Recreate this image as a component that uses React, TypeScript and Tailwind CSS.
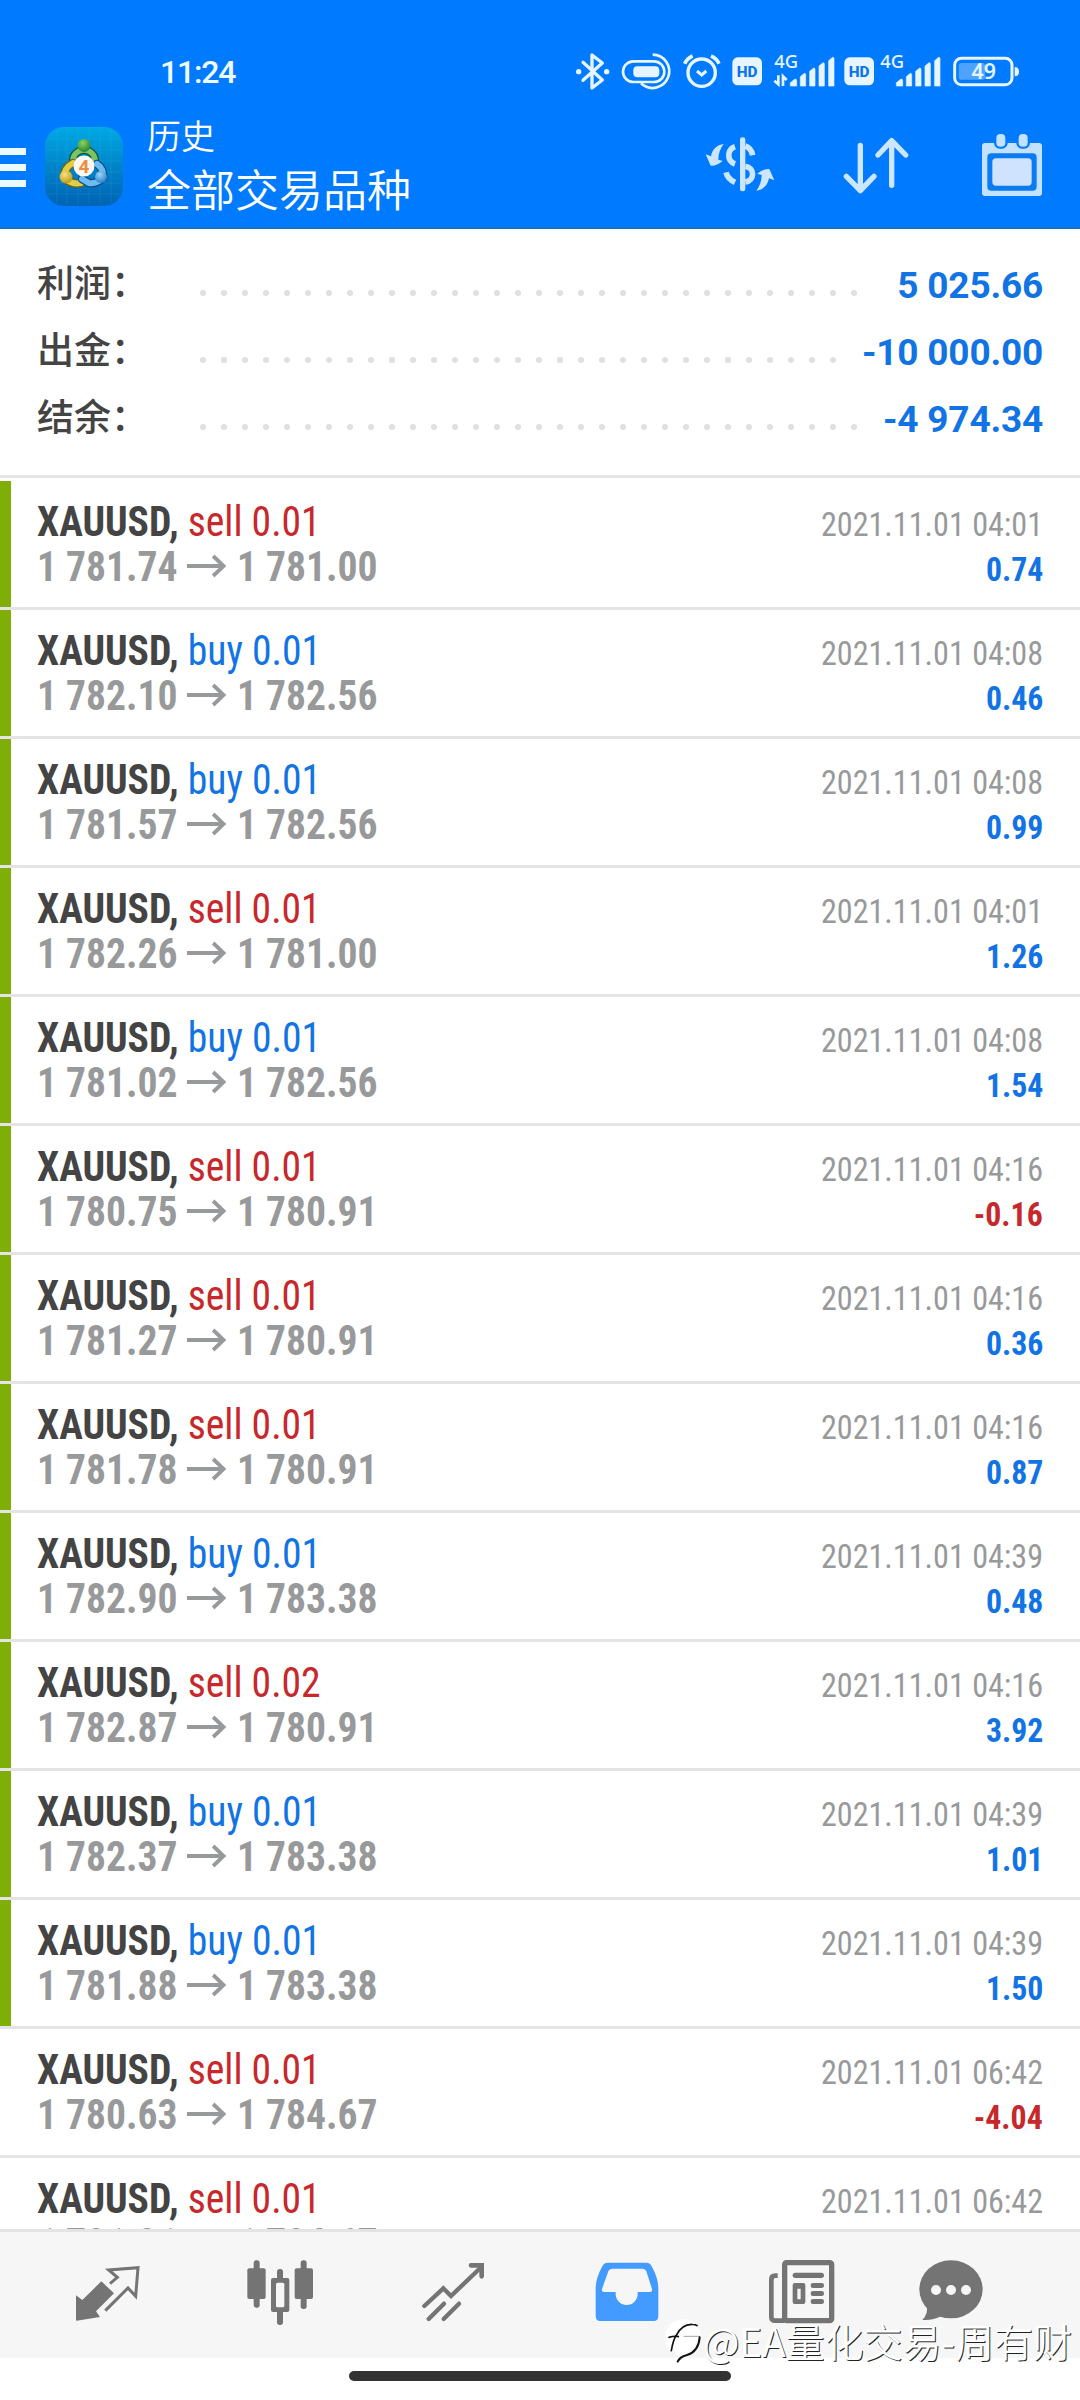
import React from 'react';
import clsx from 'clsx';

interface Deal {
  side: 'buy' | 'sell';
  volume: string;
  open: string;
  close: string;
  time: string;
  profit: string;
  marked?: boolean;
}

const totals = [
  { label: '利润：', value: '5 025.66', dots: 32 },
  { label: '出金：', value: '-10 000.00', dots: 31 },
  { label: '结余：', value: '-4 974.34', dots: 32 },
];

const deals: Deal[] = [
  { side: 'sell', volume: '0.01', open: '1 781.74', close: '1 781.00', time: '2021.11.01 04:01', profit: '0.74', marked: true },
  { side: 'buy', volume: '0.01', open: '1 782.10', close: '1 782.56', time: '2021.11.01 04:08', profit: '0.46', marked: true },
  { side: 'buy', volume: '0.01', open: '1 781.57', close: '1 782.56', time: '2021.11.01 04:08', profit: '0.99', marked: true },
  { side: 'sell', volume: '0.01', open: '1 782.26', close: '1 781.00', time: '2021.11.01 04:01', profit: '1.26', marked: true },
  { side: 'buy', volume: '0.01', open: '1 781.02', close: '1 782.56', time: '2021.11.01 04:08', profit: '1.54', marked: true },
  { side: 'sell', volume: '0.01', open: '1 780.75', close: '1 780.91', time: '2021.11.01 04:16', profit: '-0.16', marked: true },
  { side: 'sell', volume: '0.01', open: '1 781.27', close: '1 780.91', time: '2021.11.01 04:16', profit: '0.36', marked: true },
  { side: 'sell', volume: '0.01', open: '1 781.78', close: '1 780.91', time: '2021.11.01 04:16', profit: '0.87', marked: true },
  { side: 'buy', volume: '0.01', open: '1 782.90', close: '1 783.38', time: '2021.11.01 04:39', profit: '0.48', marked: true },
  { side: 'sell', volume: '0.02', open: '1 782.87', close: '1 780.91', time: '2021.11.01 04:16', profit: '3.92', marked: true },
  { side: 'buy', volume: '0.01', open: '1 782.37', close: '1 783.38', time: '2021.11.01 04:39', profit: '1.01', marked: true },
  { side: 'buy', volume: '0.01', open: '1 781.88', close: '1 783.38', time: '2021.11.01 04:39', profit: '1.50', marked: true },
  { side: 'sell', volume: '0.01', open: '1 780.63', close: '1 784.67', time: '2021.11.01 06:42', profit: '-4.04' },
  { side: 'sell', volume: '0.01', open: '1 781.31', close: '1 784.67', time: '2021.11.01 06:42', profit: '-3.36' },
];

const HdIcon = () => (
  <svg className="h-10 w-10" viewBox="501 66 120 120">
    <rect x="517" y="82" width="89" height="84" rx="16" fill="#e6f5ff" />
    <text x="561.5" y="141" fontSize="46" textAnchor="middle" className="font-['Roboto',sans-serif] font-extrabold" fill="#0a72ea">
      HD
    </text>
  </svg>
);

const SignalBars = () => (
  <path
    d="M691 168v-10l14-11q5 0 5 5v16zM721 168v-28l12-10q4 0 4 4v34zM749 168v-44l12-10q4 0 4 4v50zM777 168v-60l12-10q4 0 4 4v66zM806 168v-76l12-10q4 0 4 4v82z"
    fill="#e6f5ff"
    stroke="#e6f5ff"
    strokeWidth="2"
    strokeLinejoin="round"
  />
);

const StatusBar = () => (
  <div className="flex h-[110px] items-start pt-[52px] pl-[160px]">
    <span className="w-[416px] font-['Roboto',sans-serif] text-[32px] leading-[41px] font-medium tracking-[-1.2px] text-[#eefaff]">11:24</span>

    {/* Bluetooth */}
    <svg className="h-10 w-10" viewBox="48 66 120 120" fill="none" stroke="#e6f5ff" strokeWidth="10" strokeLinejoin="round" strokeLinecap="round">
      <path d="M69 97l58 53-31 24V75l31 24-58 52" />
      <circle cx="56" cy="125" r="8" fill="#e6f5ff" stroke="none" />
      <circle cx="140" cy="125" r="8" fill="#e6f5ff" stroke="none" />
    </svg>

    {/* Capsule */}
    <svg className="h-10 w-[61px]" viewBox="168 66 183 120" fill="none" stroke="#e6f5ff" strokeWidth="8">
      <rect x="189" y="94" width="124" height="62" rx="31" />
      <rect x="220" y="109" width="78" height="33" rx="12" fill="#e6f5ff" stroke="none" />
      <path d="M278 74A50 50 0 1 1 243 160" />
    </svg>

    {/* Alarm */}
    <svg className="h-10 w-[50px]" viewBox="351 66 150 120" fill="none" stroke="#e6f5ff" strokeWidth="10">
      <circle cx="425" cy="128" r="41" />
      <path d="M411 123l14 12 14-12" strokeWidth="9" />
      <path d="M374 101q7-16 24-23M453 78q17 7 24 23" strokeWidth="11" />
    </svg>

    <HdIcon />

    <svg className="h-10 w-[72px] overflow-visible" viewBox="621 66 216 120">
      <text x="643" y="114" fontSize="55" className="font-['Noto_Sans',sans-serif] font-medium" fill="#e6f5ff">
        4G
      </text>
      <path d="M643 152l12 11v-27M669 168v-29l11 11" fill="none" stroke="#e6f5ff" strokeWidth="8" />
      <SignalBars />
    </svg>

    <HdIcon />

    <svg className="h-10 w-[68px] overflow-visible" viewBox="957 66 204 120">
      <text x="961" y="114" fontSize="55" className="font-['Noto_Sans',sans-serif] font-medium" fill="#e6f5ff">
        4G
      </text>
      <g transform="translate(318 0)">
        <SignalBars />
      </g>
    </svg>

    {/* Battery */}
    <svg className="h-10 w-20 overflow-visible" viewBox="1161 66 240 120">
      <rect x="1196" y="99" width="80" height="50" rx="8" fill="#4da3ff" />
      <rect x="1184" y="85" width="172" height="79" rx="20" fill="none" stroke="#e6f5ff" strokeWidth="9" />
      <path d="M1364 111q13 0 13 14t-13 14z" fill="#e6f5ff" />
      <text x="1271" y="147" fontSize="64" textAnchor="middle" className="font-['Noto_Sans',sans-serif] font-semibold" fill="#e6f5ff">
        49
      </text>
    </svg>
  </div>
);

const AppLogo = () => (
  <svg className="mt-[17px] ml-[19px] h-[79px] w-[78px]" viewBox="0 0 78 79">
    <defs>
      <linearGradient id="tile" x1="0" y1="0" x2="0" y2="1">
        <stop offset="0" stopColor="#00a9e4" />
        <stop offset="0.5" stopColor="#0084c8" />
        <stop offset="1" stopColor="#0062b4" />
      </linearGradient>
      <radialGradient id="green" cx="0.4" cy="0.3" r="0.8">
        <stop offset="0" stopColor="#8fd45e" />
        <stop offset="1" stopColor="#1b7a2c" />
      </radialGradient>
      <radialGradient id="yellow" cx="0.4" cy="0.3" r="0.8">
        <stop offset="0" stopColor="#f7e47a" />
        <stop offset="1" stopColor="#b58d10" />
      </radialGradient>
      <radialGradient id="blue" cx="0.4" cy="0.3" r="0.8">
        <stop offset="0" stopColor="#9bd6f8" />
        <stop offset="1" stopColor="#1c76c4" />
      </radialGradient>
    </defs>
    <rect width="78" height="79" rx="19" fill="url(#tile)" />
    <path d="M12 2v75M22 2v75M33 2v75M44 2v75M55 2v75M66 2v75M2 12h74M2 23h74M2 34h74M2 45h74M2 56h74M2 67h74" stroke="#4fc3f0" strokeOpacity="0.14" strokeWidth="1" />
    <g fill="none" strokeLinecap="round">
      <path d="M28 33a11 10 0 1 1 22 0" stroke="#0c5a2c" strokeWidth="8" />
      <path d="M28 33a11 10 0 1 1 22 0" stroke="#7cc266" strokeWidth="5.500" />
      <path d="M28 36q-9 5-9 14 6 8 17 6" stroke="#6e6414" strokeWidth="8.500" />
      <path d="M28 36q-9 5-9 14 6 8 17 6" stroke="#e0cf45" strokeWidth="6" />
      <path d="M52 37q7 5 6 14-6 6-14 5l-7-4" stroke="#0d4c8a" strokeWidth="8.500" />
      <path d="M52 37q7 5 6 14-6 6-14 5l-7-4" stroke="#6dbcf0" strokeWidth="6" />
    </g>
    <circle cx="39" cy="18.500" r="6.500" fill="url(#green)" />
    <circle cx="21" cy="50" r="6.500" fill="url(#yellow)" />
    <circle cx="56" cy="50" r="6" fill="url(#blue)" />
    <circle cx="39" cy="39" r="10.500" fill="#fdf8f2" />
    <text x="39" y="46" fontSize="19" textAnchor="middle" className="font-['Roboto',sans-serif] font-bold" fill="#ee8c3c">
      4
    </text>
  </svg>
);

const TitleBar = () => (
  <div className="flex h-[117px] items-start">
    <div className="mt-[38px] flex w-[26px] flex-col gap-[9px]">
      <span className="h-[7px] bg-[#ecfaff]" />
      <span className="h-[7px] bg-[#ecfaff]" />
      <span className="h-[7px] bg-[#ecfaff]" />
    </div>
    <AppLogo />
    <div className="ml-6 flex flex-col font-['Noto_Sans_CJK_SC',sans-serif] font-[350] text-white">
      <span className="mt-[3px] text-[34px] leading-[44px]">历史</span>
      <span className="text-[44px] leading-[62px]">全部交易品种</span>
    </div>

    <div className="mt-[22px] ml-auto flex pr-[37px]">
      {/* Currency */}
      <svg className="h-[66px] w-[71px]" viewBox="435 306 213 198" fill="#cce6ff">
        <rect x="540" y="322" width="16" height="162" rx="7" />
        <path d="M491 342C474 344 457 355 453 379l-16-6 15 34q17 2 36-14l-13-4c0-18 6-34 16-47z" />
        <path d="M491 342C474 344 457 355 453 379l-16-6 15 34q17 2 36-14l-13-4c0-18 6-34 16-47z" transform="rotate(180 540 412)" />
        <g fill="none" stroke="#cce6ff" strokeWidth="17">
          <path d="M525 350c-25 9-25 43 0 52" />
          <path d="M498 427q5 20 27 30" />
          <path d="M556 348q18 6 22 28" />
          <path d="M556 409c29 3 29 43 0 47" />
        </g>
      </svg>

      {/* Sort */}
      <svg className="ml-[66px] h-[66px] w-[68px]" viewBox="846 306 204 198" fill="none" stroke="#cce6ff" strokeWidth="16" strokeLinecap="round" strokeLinejoin="round">
        <path d="M901 346v134M859 439l42 43 41-43" />
        <path d="M995 466V334M954 375l41-43 42 43" />
      </svg>

      {/* Calendar */}
      <svg className="ml-[71px] h-[66px] w-[62px]" viewBox="1263 306 186 198">
        <rect x="1266" y="339" width="180" height="159" rx="9" fill="#c2e2ff" />
        <rect x="1282" y="370" width="148" height="112" rx="12" fill="#0a7bf2" />
        <rect x="1297" y="385" width="118" height="82" rx="11" fill="#cfe3ff" />
        <rect x="1302" y="306" width="41" height="50" rx="17" fill="#007aff" />
        <rect x="1369" y="306" width="41" height="50" rx="17" fill="#007aff" />
        <rect x="1309" y="312" width="27" height="38" rx="12" fill="#c2e2ff" />
        <rect x="1376" y="312" width="27" height="38" rx="12" fill="#c2e2ff" />
      </svg>
    </div>
  </div>
);

const Totals = () => (
  <section className="h-[249px] border-b-[3px] border-[#e4e4e4] pt-[23px]">
    {totals.map((item) => (
      <div key={item.label} className="flex h-[67px] items-start pr-[37px] pl-[37px]">
        <span className="w-[163px] font-['Noto_Sans_CJK_SC',sans-serif] text-[37px] leading-[59px] font-medium text-[#444444]">{item.label}</span>
        <div className="mt-[38px] flex gap-[15px]">
          {Array.from({ length: item.dots }, (_, i) => (
            <span key={i} className="size-[6px] rounded-full bg-[#e0e0e0]" />
          ))}
        </div>
        <span className="ml-auto font-['Roboto',sans-serif] text-[37px] leading-[67px] font-bold tracking-[-0.2px] text-[#1274e4]">{item.value}</span>
      </div>
    ))}
  </section>
);

const DealRow: React.FC<{ deal: Deal }> = ({ deal }) => (
  <div className="flex h-[129px] shrink-0 border-b-[3px] border-[#e4e4e4] font-['Roboto_Condensed',sans-serif]">
    <div className={clsx('w-[11px]', deal.marked && 'bg-[#80ae08]')} />
    <div className="flex flex-1 flex-col pt-[18px] pr-[37px] pl-[26px]">
      <div className="flex h-[45px] items-baseline justify-between">
        <span className="origin-left scale-x-[0.942] text-[42px] leading-[45px]">
          <span className="font-bold text-[#444444]">XAUUSD, </span>
          <span className={deal.side === 'sell' ? 'text-[#c6282b]' : 'text-[#1274e4]'}>
            {deal.side} {deal.volume}
          </span>
        </span>
        <span className="origin-right scale-x-[0.945] text-[34px] leading-[45px] text-[#98999a]">{deal.time}</span>
      </div>
      <div className="flex h-[45px] items-baseline justify-between">
        <span className="flex origin-left scale-x-[0.942] text-[42px] leading-[45px] font-bold text-[#98999a]">
          <span>{deal.open}</span>
          <svg className="mt-2 mr-[11px] ml-[10px] h-7 w-[42px]" viewBox="0 0 42 28" fill="none" stroke="#98999a" strokeWidth="4">
            <path d="M0 14h38M28 4l11 10-11 10" />
          </svg>
          <span>{deal.close}</span>
        </span>
        <span className={clsx('origin-right scale-x-[0.935] text-[34px] leading-[45px] font-bold', deal.profit.startsWith('-') ? 'text-[#c6282b]' : 'text-[#1274e4]')}>{deal.profit}</span>
      </div>
    </div>
  </div>
);

const BottomNav = () => (
  <nav className="flex h-[129px] items-start border-t-[3px] border-[#e4e4e4] bg-[#f6f6f6] pt-[26px] pl-[75px]">
    {/* Quotes */}
    <svg className="h-[70px] w-[66px]" viewBox="45 114 198 210">
      <path d="M48 226l19 14 57-56 38 36-54 54 12 17-70 11q-2 0-2-2z" fill="#747474" />
      <path d="M150 191l22-19-26-22 88-7-7 86-23-25-68 68" fill="none" stroke="#747474" strokeWidth="9" />
    </svg>

    {/* Charts */}
    <svg className="ml-[105px] h-[70px] w-[68px]" viewBox="558 114 204 210" fill="#747474">
      <rect x="581" y="121" width="18" height="142" rx="8" />
      <rect x="562" y="145" width="55" height="92" rx="6" />
      <rect x="651" y="147" width="18" height="168" rx="8" />
      <rect x="633" y="174" width="55" height="102" rx="6" />
      <rect x="648" y="188" width="25" height="74" rx="5" fill="#f6f6f6" />
      <rect x="722" y="121" width="18" height="146" rx="8" />
      <rect x="704" y="145" width="55" height="92" rx="6" />
    </svg>

    {/* Trade */}
    <svg className="ml-[107px] h-[70px] w-[65px]" viewBox="1083 114 195 210" fill="none" stroke="#747474" strokeWidth="13" strokeLinecap="round">
      <path d="M1093 258l57-53 23 23 88-84" />
      <path d="M1233 136h32v33" strokeWidth="14" />
      <path d="M1106 297l46-46M1151 297l46-46" />
    </svg>

    {/* History */}
    <svg className="ml-[108px] h-[70px] w-[66px]" viewBox="72 54 198 210">
      <path
        fillRule="evenodd"
        d="M112 68h118q10 0 15 11 20 36 20 66v83q0 15-14 15H91q-14 0-14-15v-83q0-30 20-66 5-11 15-11zM126 86q-8 0-11 8l-19 53q-2 9 6 9h35v6a33 33 0 0 0 66 0v-6h36q9 0 7-9l-17-53q-3-8-11-8z"
        fill="#439bff"
      />
    </svg>

    {/* News */}
    <svg className="ml-[108px] h-[70px] w-[68px]" viewBox="594 54 204 210" fill="#747474">
      <rect x="644" y="68" width="141" height="174" rx="6" fill="none" stroke="#747474" strokeWidth="16" />
      <path d="M623 107h-7q-12 0-12 12v112q0 11 12 11h26" fill="none" stroke="#747474" strokeWidth="14" />
      <rect x="668" y="98" width="94" height="16" rx="8" />
      <path fillRule="evenodd" d="M674 129h26q6 0 6 6v51q0 6-6 6h-26q-6 0-6-6v-51q0-6 6-6zM682 146v32h10v-32z" />
      <rect x="722" y="129" width="40" height="15" rx="7" />
      <rect x="722" y="153" width="40" height="15" rx="7" />
      <rect x="722" y="177" width="40" height="15" rx="7" />
    </svg>

    {/* Messages */}
    <svg className="ml-[82px] h-[70px] w-[66px]" viewBox="1044 54 198 210">
      <path d="M1070 196q6 24-13 44 32 2 58-12z" fill="#747474" />
      <ellipse cx="1143" cy="148" rx="95" ry="87" fill="#747474" />
      <circle cx="1098" cy="150" r="15" fill="#f6f6f6" />
      <circle cx="1143" cy="150" r="15" fill="#f6f6f6" />
      <circle cx="1188" cy="150" r="15" fill="#f6f6f6" />
    </svg>
  </nav>
);

const Watermark = () => (
  <div className="absolute right-[8px] bottom-[36px] flex items-center gap-px">
    <svg className="h-[45px] w-[38px]" viewBox="38 40 114 135" fill="none" strokeLinecap="round">
      <circle cx="96" cy="98" r="54" fill="#ffffff" />
      <path d="M60 138q6-34 15-46 16-34 48-33 10 0 14 4M53 98q16-5 28-2" stroke="#111111" strokeWidth="5" />
      <path d="M98 95h47" stroke="#777777" strokeWidth="2" />
      <path d="M145 98q-3 42-38 53-22 6-28 20" stroke="#111111" strokeWidth="6" />
    </svg>
    <span className="font-['Noto_Sans_CJK_SC',sans-serif] text-[39px] leading-[48px] font-[350] whitespace-nowrap text-white [text-shadow:1px_1px_0_#222222]">@EA量化交易-周有财</span>
  </div>
);

const App: React.FC = () => (
  <div className="relative flex h-[2400px] w-[1080px] flex-col overflow-hidden bg-white">
    <header className="h-[229px] shrink-0 border-b-2 border-[#1b70c4] bg-[#007aff]">
      <StatusBar />
      <TitleBar />
    </header>
    <Totals />
    <main className="flex min-h-0 flex-1 flex-col overflow-hidden pt-[3px]">
      {deals.map((deal, i) => (
        <DealRow key={i} deal={deal} />
      ))}
    </main>
    <BottomNav />
    <div className="flex h-[42px] shrink-0 justify-center bg-white pt-[13px]">
      <div className="h-[10px] w-[382px] rounded-full bg-[#333333]" />
    </div>
    <Watermark />
  </div>
);

export default App;
